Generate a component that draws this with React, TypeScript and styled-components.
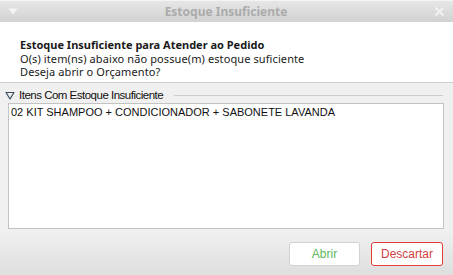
import styled, { createGlobalStyle } from "styled-components";

const Global = createGlobalStyle`
  html, body {
    margin:0;
    padding:0;
    background:#f0f0f0;
  }
  #root{
    width:453px;
    height:275px;
    overflow:hidden;
  }
`;

const Window = styled.div`
  display:flex;
  flex-direction:column;
  width:453px;
  height:275px;
  font-family:"Noto Sans", "DejaVu Sans", sans-serif;
`;

const TitleBar = styled.div`
  height:22px;
  flex:none;
  display:flex;
  align-items:center;
  justify-content:space-between;
  padding:0 8px 0 8px;
  background:linear-gradient(#e6e6e6, #d2d2d2);
  border-top:1px solid #f4f4f4;
  box-sizing:border-box;
`;

const Title = styled.div`
  font-size:12px;
  font-weight:bold;
  color:#ababab;
`;

const Header = styled.div`
  flex:none;
  height:61px;
  box-sizing:border-box;
  background:#fff;
  border-bottom:1px solid #cfcfcf;
  padding:16px 20px 0 20px;
  font-size:11px;
  line-height:13.5px;
  color:#1a1a1a;
`;

const Strong = styled.div`
  font-weight:bold;
`;

const Plain = styled.div`
  letter-spacing:0.1px;
`;

const Body = styled.div`
  flex:1;
  display:flex;
  flex-direction:column;
  padding:4px 9px 0 5px;
  background:#f0f0f0;
`;

const Legend = styled.div`
  display:flex;
  align-items:center;
  gap:4px;
  height:16px;
  font-family:"Liberation Sans", Arial, sans-serif;
  font-size:11.5px;
  letter-spacing:-0.5px;
  color:#111;
  &::after{
    content:"";
    flex:1;
    height:1px;
    margin-left:7px;
    margin-right:1px;
    background:#cdcdcd;
  }
`;

const ListBox = styled.div`
  height:126px;
  margin-left:3px;
  box-sizing:border-box;
  background:#fff;
  border:1px solid #c3c3c3;
  padding:1px 2px;
  font-family:"Liberation Sans", Arial, sans-serif;
  font-size:11px;
  line-height:14px;
  color:#111;
`;

const Footer = styled.div`
  flex:none;
  height:46px;
  display:flex;
  align-items:center;
  justify-content:flex-end;
  gap:11px;
  padding:0 10px 0 0;
  background:linear-gradient(#f1f1f1, #dedede);
`;

const Button = styled.button<{ $tone: "ok" | "danger" }>`
  height:24px;
  padding:0;
  width:${({ $tone }) => ($tone === "ok" ? "71px" : "72px")};
  background:#fff;
  border-radius:3px;
  border:1px solid ${({ $tone }) => ($tone === "ok" ? "#d2d2d2" : "#e03a3a")};
  color:${({ $tone }) => ($tone === "ok" ? "#5cb85c" : "#d43f3f")};
  font-family:"Liberation Sans", Arial, sans-serif;
  font-size:12px;
  margin-top:4px;
`;

const Strip = styled.div`
  flex:none;
  height:3px;
  background:repeating-linear-gradient(90deg, #7a7a9a 0 2px, #c8b070 2px 3px, #9a9a9a 3px 5px, #5a6a8a 5px 7px);
  border-top:1px solid #999;
  box-sizing:border-box;
`;

const Arrow = ({ size = 9, color = "#fff" }: { size?: number; color?: string }) => (
  <svg width={size} height={size * 0.7} viewBox="0 0 10 7">
    <path d="M0.5 0.5 L9.5 0.5 L5 6.5 Z" fill={color} />
  </svg>
);

const CloseIcon = () => (
  <svg width="11" height="11" viewBox="0 0 11 11">
    <path d="M1.5 1.5 L9.5 9.5 M9.5 1.5 L1.5 9.5" stroke="#f2f2f2" strokeWidth="2" />
  </svg>
);

const LegendArrow = () => (
  <svg width="10" height="9" viewBox="0 0 10 9">
    <path d="M1 1.5 L9 1.5 L5 8 Z" fill="none" stroke="#3c4c5c" strokeWidth="1.2" strokeLinejoin="round" />
  </svg>
);

export default function App() {
  return (
    <Window>
      <Global />
      <TitleBar>
        <Arrow size={10} color="#f5f5f5" />
        <Title>Estoque Insuficiente</Title>
        <CloseIcon />
      </TitleBar>
      <Header>
        <Strong>Estoque Insuficiente para Atender ao Pedido</Strong>
        <Plain>O(s) item(ns) abaixo não possue(m) estoque suficiente</Plain>
        <Plain>Deseja abrir o Orçamento?</Plain>
      </Header>
      <Body>
        <Legend>
          <LegendArrow />
          Itens Com Estoque Insuficiente
        </Legend>
        <ListBox>02 KIT SHAMPOO + CONDICIONADOR + SABONETE LAVANDA</ListBox>
      </Body>
      <Footer>
        <Button $tone="ok">Abrir</Button>
        <Button $tone="danger">Descartar</Button>
      </Footer>
      <Strip />
    </Window>
  );
}
